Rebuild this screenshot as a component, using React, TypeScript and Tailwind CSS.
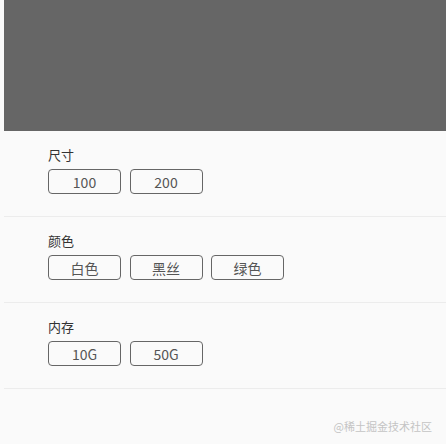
const groups = [
  { name: "尺寸", options: ["100", "200"] },
  { name: "颜色", options: ["白色", "黑丝", "绿色"] },
  { name: "内存", options: ["10G", "50G"] },
];

const App = () => {
  return (
    <div
      className="relative h-[444px] w-[446px] overflow-hidden bg-[#fafafa] pl-1"
      style={{ fontFamily: '"Noto Sans CJK SC", "Noto Sans", sans-serif' }}
    >
      <div className="h-[131px] w-full bg-[#666666]" />
      {groups.map((group) => (
        <div
          key={group.name}
          className="border-b border-[#ececec] pb-[22px] pl-[44px] pt-[15px]"
        >
          <div className="text-[13px] leading-[18px] text-[#333]">
            {group.name}
          </div>
          <div className="mt-[5px] flex gap-[8.5px]">
            {group.options.map((opt) => (
              <button
                key={opt}
                type="button"
                className="flex h-[25px] w-[73px] items-center justify-center rounded-[4px] border border-[#666] text-[14px] leading-none text-[#555]"
              >
                {opt}
              </button>
            ))}
          </div>
        </div>
      ))}
      <div className="absolute bottom-[11px] right-[14px] text-[11px] leading-[14px] text-[#c4c4c4]">
        @稀土掘金技术社区
      </div>
    </div>
  );
};

export default App;
